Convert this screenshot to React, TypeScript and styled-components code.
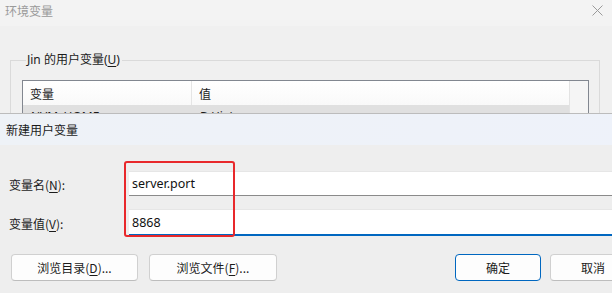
import React from "react";
import styled, { createGlobalStyle } from "styled-components";

const Global = createGlobalStyle`
  html, body { margin: 0; padding: 0; }
  body {
    font-family: "Noto Sans", "Noto Sans CJK SC", sans-serif;
    font-size: 12px;
    color: #1b1b1b;
    background: #f0f0f0;
  }
`;

const Screen = styled.div`
  position: relative;
  width: 612px;
  height: 293px;
  overflow: hidden;
  background: #f0f0f0;
`;

const TitleBar = styled.div`
  height: 26px;
  display: flex;
  align-items: center;
  justify-content: space-between;
  padding: 0 9px 6px 5px;
  box-sizing: border-box;
  background: #f3f3f3;
  color: #9a9a9a;
  font-size: 12px;
  font-family: "Noto Sans CJK SC", sans-serif;
`;

const Body = styled.div`
  padding: 26px 12px 0 10px;
`;

const GroupBox = styled.fieldset`
  margin: 0;
  padding: 12px 10px 20px 11px;
  border: 1px solid #dadada;
  height: 220px;
  box-sizing: border-box;
`;

const Legend = styled.legend`
  padding: 0 2px 0 1px;
  margin-left: 4px;
  font-family: "Noto Sans", "Noto Sans CJK SC", sans-serif;
  font-size: 12px;
  color: #1b1b1b;
  line-height: 16px;
`;

const ListView = styled.div`
  border: 1px solid #828790;
  background: #fff;
  display: flex;
  height: 120px;
`;

const ListMain = styled.div`
  flex: 1;
  display: flex;
  flex-direction: column;
`;

const HeaderRow = styled.div`
  display: grid;
  grid-template-columns: 169px 1fr;
  height: 24px;
  background: linear-gradient(#ffffff, #f9f9f9);
`;

const HeaderCell = styled.div<{ $divider?: boolean }>`
  display: flex;
  align-items: center;
  padding-left: 7px;
  font-family: "Noto Sans CJK SC", sans-serif;
  font-size: 12px;
  border-right: ${(p) => (p.$divider ? "1px solid #e5e5e5" : "none")};
`;

const DataRow = styled.div`
  display: grid;
  grid-template-columns: 169px 1fr;
  height: 20px;
  background: #e0e0e0;
`;

const DataCell = styled.div`
  padding: 5px 0 0 8px;
  font-size: 12px;
  line-height: 14px;
`;

const ScrollTrack = styled.div`
  width: 18px;
  background: #f5f5f5;
  border-left: 1px solid #e3e3e3;
`;

const Dialog = styled.div`
  position: absolute;
  left: 0;
  top: 113px;
  width: 660px;
  bottom: 0;
  background: #eeeeee;
  border-top: 1px solid #bcbcbc;
  display: flex;
  flex-direction: column;
`;

const DialogHeader = styled.div`
  height: 31px;
  display: flex;
  align-items: center;
  padding-left: 6px;
  padding-bottom: 1px;
  box-sizing: border-box;
  background: linear-gradient(90deg, #eef2f7, #eef2fa);
  font-family: "Noto Sans CJK SC", sans-serif;
  font-size: 12px;
  color: #1b1b1b;
`;

const Form = styled.div`
  position: relative;
  display: flex;
  flex-direction: column;
  padding: 26px 0 0 9px;
`;

const FieldRow = styled.div<{ $gap?: number }>`
  display: flex;
  align-items: stretch;
  margin-bottom: ${(p) => p.$gap ?? 0}px;
`;

const Label = styled.div`
  width: 120px;
  display: flex;
  align-items: center;
  font-family: "Noto Sans CJK SC", sans-serif;
  font-size: 12px;
  padding-top: 1px;
`;

const U = styled.span`
  text-decoration: underline;
  text-underline-offset: 2px;
`;

const Input = styled.div<{ $focused?: boolean }>`
  width: 520px;
  height: ${(p) => (p.$focused ? 24 : 23)}px;
  background: #ffffff;
  border-top: 1px solid #e6e6e6;
  border-bottom: ${(p) => (p.$focused ? "2px solid #0067c0" : "1px solid #8a8a8a")};
  display: flex;
  align-items: center;
  padding-left: 3px;
  font-family: "Noto Sans", sans-serif;
  font-size: 12.5px;
  color: #111;
`;

const Highlight = styled.div`
  position: absolute;
  left: 124px;
  top: 16px;
  width: 111px;
  height: 76px;
  box-sizing: border-box;
  border: 2px solid #e8282b;
  border-radius: 3px;
`;

const ButtonRow = styled.div`
  display: flex;
  align-items: center;
  padding: 18px 0 0 11px;
`;

const Button = styled.button<{ $w: number; $primary?: boolean; $ml?: number }>`
  width: ${(p) => p.$w}px;
  height: 27px;
  margin-left: ${(p) => p.$ml ?? 0}px;
  box-sizing: border-box;
  background: #fdfdfd;
  border: 1px solid ${(p) => (p.$primary ? "#0067c0" : "#d0d0d0")};
  border-bottom-color: ${(p) => (p.$primary ? "#0067c0" : "#bdbdbd")};
  border-radius: 4px;
  font-family: "Noto Sans CJK SC", sans-serif;
  font-size: 12px;
  color: #1b1b1b;
  padding: 0;
  display: flex;
  align-items: center;
  justify-content: center;
`;

const CloseIcon = () => (
  <svg width="11" height="11" viewBox="0 0 11 11">
    <path d="M0.5 0.5 L10.5 10.5 M10.5 0.5 L0.5 10.5" stroke="#9a9a9a" strokeWidth="1" />
  </svg>
);

export default function App() {
  return (
    <>
      <Global />
      <Screen>
        <TitleBar>
          <span>环境变量</span>
          <CloseIcon />
        </TitleBar>
        <Body>
          <GroupBox>
            <Legend>
              Jin 的用户变量(<U>U</U>)
            </Legend>
            <ListView>
              <ListMain>
                <HeaderRow>
                  <HeaderCell $divider>变量</HeaderCell>
                  <HeaderCell>值</HeaderCell>
                </HeaderRow>
                <DataRow>
                  <DataCell>NVM_HOME</DataCell>
                  <DataCell>D:\Jin\nvm</DataCell>
                </DataRow>
              </ListMain>
              <ScrollTrack />
            </ListView>
          </GroupBox>
        </Body>
        <Dialog>
          <DialogHeader>新建用户变量</DialogHeader>
          <Form>
            <FieldRow $gap={13}>
              <Label>
                变量名(<U>N</U>):
              </Label>
              <Input>server.port</Input>
            </FieldRow>
            <FieldRow>
              <Label>
                变量值(<U>V</U>):
              </Label>
              <Input $focused>8868</Input>
            </FieldRow>
            <Highlight />
          </Form>
          <ButtonRow>
            <Button $w={127}>
              浏览目录(<U>D</U>)...
            </Button>
            <Button $w={128} $ml={11}>
              浏览文件(<U>F</U>)...
            </Button>
            <Button $w={86} $ml={178} $primary>
              确定
            </Button>
            <Button $w={86} $ml={9}>
              取消
            </Button>
          </ButtonRow>
        </Dialog>
      </Screen>
    </>
  );
}
